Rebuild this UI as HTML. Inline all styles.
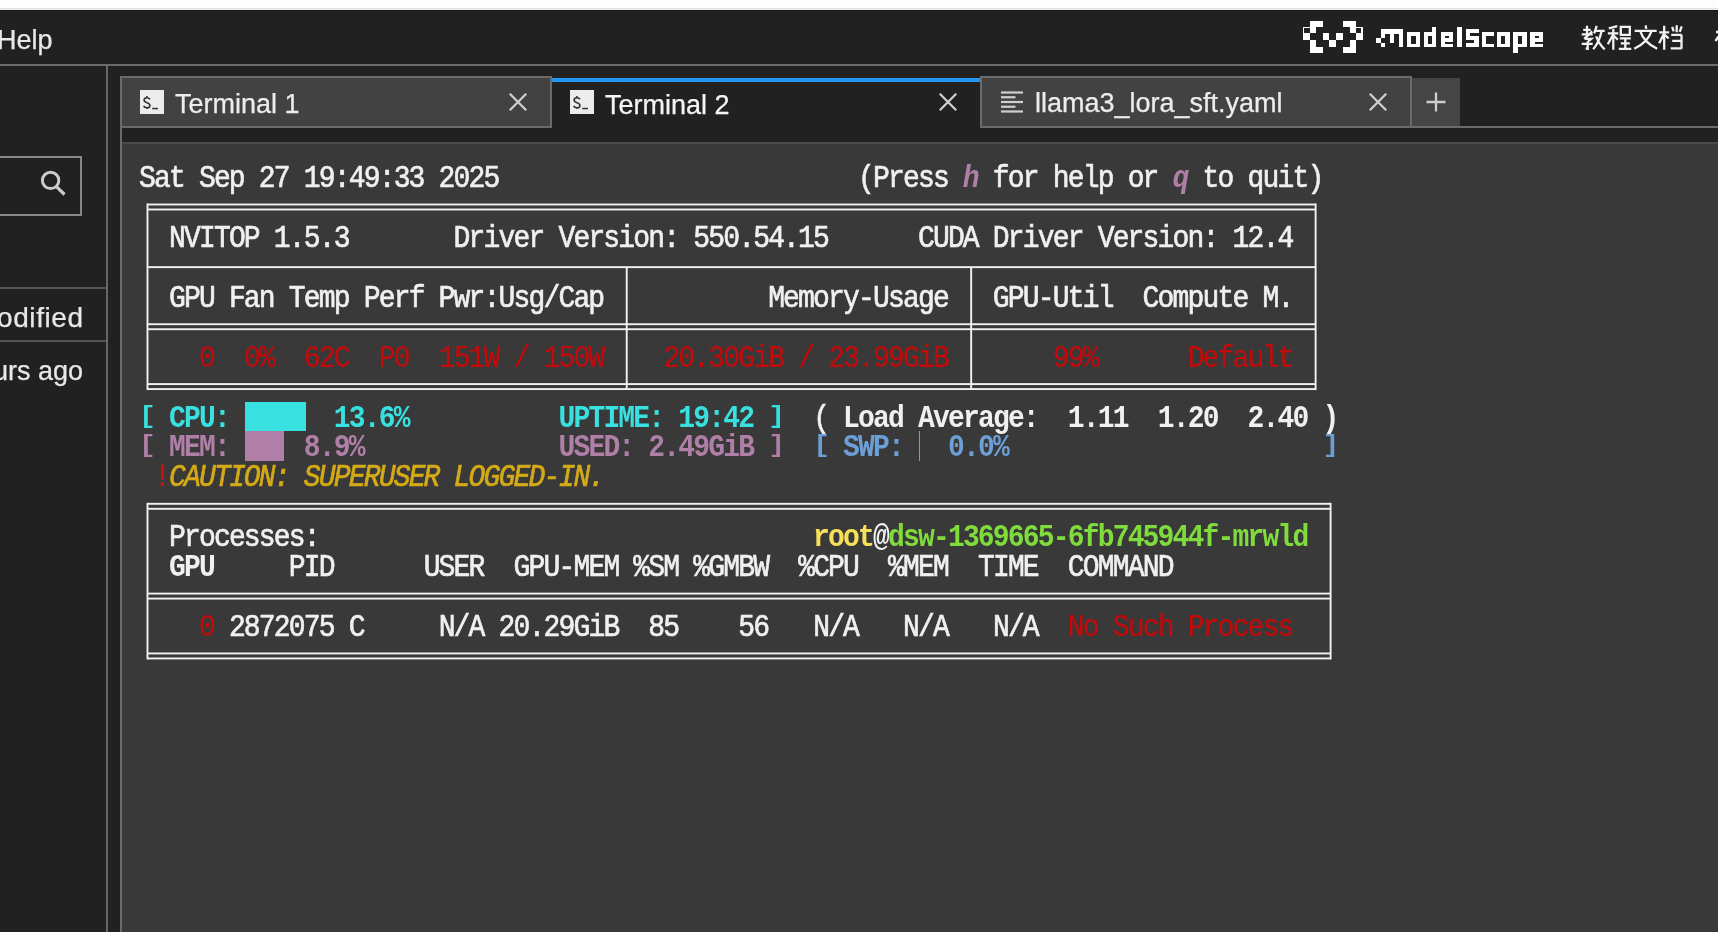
<!DOCTYPE html><html><head><meta charset="utf-8"><style>
*{margin:0;padding:0;box-sizing:border-box}
html,body{width:1718px;height:932px;overflow:hidden;background:#212121}
body{position:relative;font-family:"Liberation Sans",sans-serif;color:#eee}
.a{position:absolute}
.u{-webkit-text-stroke:0.25px currentColor;will-change:transform}
.row{position:absolute;left:139.088px;height:29.93px;line-height:29.93px;white-space:pre;font-family:"Liberation Mono",monospace;font-size:28.0px;letter-spacing:-1.824px;color:#f0f0f0;-webkit-text-stroke:0.6px currentColor;will-change:transform}
.row>i{font-style:normal;display:inline-block;transform:scaleY(1.1);transform-origin:50% 50%}
.row>i.b{font-weight:bold;-webkit-text-stroke:0}
.row>i.it{font-style:italic}
.row>i.rd{-webkit-text-stroke:0.15px currentColor}
.row>i.br{font-weight:bold;-webkit-text-stroke:0;transform:translateY(-1.5px) scaleY(0.84)}
</style></head><body>
<div class="a" style="left:0;top:0;width:1718px;height:8px;background:#fdfdfd"></div>
<div class="a" style="left:0;top:8px;width:1718px;height:1px;background:#e2e2e2"></div>
<div class="a" style="left:0;top:9px;width:1718px;height:1px;background:#eeeeee"></div>
<div class="a" style="left:0;top:10px;width:1718px;height:1px;background:#171717"></div>
<div class="a u" style="left:-3px;top:20px;font-size:27px;line-height:40px;color:#e8e8e8">Help</div>
<div class="a" style="left:0;top:64px;width:1718px;height:2px;background:#6b6b6b"></div>
<div class="a" style="left:106px;top:66px;width:2px;height:866px;background:#666666"></div>
<div class="a" style="left:-2px;top:156px;width:84px;height:60px;border:2px solid #888888"></div>
<svg class="a" style="left:36px;top:166px" width="34" height="34" viewBox="0 0 34 34"><circle cx="14.6" cy="14.4" r="8.2" fill="none" stroke="#cccccc" stroke-width="3"/><line x1="20.4" y1="20.6" x2="28.5" y2="28.5" stroke="#cccccc" stroke-width="3.2"/></svg>
<div class="a" style="left:0;top:287px;width:106px;height:2px;background:#555555"></div>
<div class="a" style="left:0;top:340px;width:106px;height:2px;background:#555555"></div>
<div class="a u" style="left:-3px;top:298px;font-size:28px;letter-spacing:0.6px;line-height:40px;color:#e8e8e8;white-space:pre">odified</div>
<div class="a u" style="left:-37px;top:351px;font-size:27px;line-height:40px;color:#e8e8e8;white-space:pre">hours ago</div>
<svg class="a" style="left:0;top:0" width="1718" height="66" shape-rendering="crispEdges"><g fill="#ffffff"><rect x="1309.7" y="20.8" width="6.30" height="6.00"/><rect x="1316.0" y="20.8" width="6.50" height="6.00"/><rect x="1342.8" y="20.8" width="6.80" height="6.00"/><rect x="1349.6" y="20.8" width="6.20" height="6.00"/><rect x="1309.7" y="26.8" width="6.30" height="6.50"/><rect x="1349.6" y="26.8" width="6.20" height="6.50"/><rect x="1303.0" y="33.3" width="6.70" height="6.80"/><rect x="1322.5" y="33.3" width="6.80" height="6.80"/><rect x="1336.0" y="33.3" width="6.80" height="6.80"/><rect x="1355.8" y="33.3" width="6.80" height="6.80"/><rect x="1309.7" y="40.1" width="6.30" height="6.80"/><rect x="1329.3" y="40.1" width="6.70" height="6.80"/><rect x="1349.6" y="40.1" width="6.20" height="6.80"/><rect x="1309.7" y="46.9" width="6.30" height="6.20"/><rect x="1316.0" y="46.9" width="6.50" height="6.20"/><rect x="1342.8" y="46.9" width="6.80" height="6.20"/><rect x="1349.6" y="46.9" width="6.20" height="6.20"/><rect x="1303.0" y="26.8" width="6.70" height="6.50"/><rect x="1355.8" y="26.8" width="6.80" height="6.50"/><rect x="1380.9" y="29.3" width="22.00" height="4.70"/><rect x="1380.9" y="29.3" width="4.20" height="8.40"/><rect x="1376.2" y="37.7" width="4.70" height="5.30"/><rect x="1380.9" y="43.0" width="4.20" height="4.10"/><rect x="1389.8" y="34.0" width="4.20" height="8.90"/><rect x="1398.7" y="29.3" width="4.20" height="17.80"/><rect x="1407.1" y="32.2" width="12.60" height="14.90"/><rect x="1423.9" y="32.2" width="12.50" height="14.90"/><rect x="1432.2" y="27.0" width="4.20" height="5.20"/><rect x="1440.6" y="32.2" width="12.60" height="14.90"/><rect x="1457.2" y="27.0" width="4.50" height="20.10"/><rect x="1465.5" y="28.8" width="13.30" height="18.30"/><rect x="1482.0" y="32.2" width="12.00" height="14.90"/><rect x="1496.9" y="32.2" width="13.10" height="14.90"/><rect x="1513.4" y="32.2" width="13.10" height="14.90"/><rect x="1513.4" y="47.1" width="4.70" height="5.80"/><rect x="1529.9" y="32.2" width="13.10" height="14.90"/></g><g fill="#212121"><rect x="1304.4" y="28.1" width="5.30" height="5.20"/><rect x="1355.8" y="28.1" width="5.40" height="5.20"/></g><g fill="#212121"><rect x="1411.3" y="35.9" width="4.20" height="7.80"/><rect x="1428.0" y="35.9" width="4.20" height="7.80"/><rect x="1444.8" y="35.9" width="4.20" height="1.80"/><rect x="1444.8" y="41.9" width="8.40" height="1.80"/><rect x="1470.2" y="33.3" width="8.60" height="2.60"/><rect x="1465.5" y="40.1" width="8.10" height="2.60"/><rect x="1486.4" y="35.9" width="7.60" height="7.60"/><rect x="1501.1" y="35.9" width="4.20" height="7.60"/><rect x="1518.1" y="35.9" width="3.90" height="7.60"/><rect x="1534.6" y="35.9" width="4.20" height="2.10"/><rect x="1534.6" y="42.2" width="8.40" height="1.80"/></g></svg>
<svg class="a" style="left:0;top:0" width="1718" height="66"><g fill="none" stroke="#f2f2f2" stroke-width="2.3"><path transform="translate(1581.2,25.3)" d="M2 4.5H9.5M5.8 0.5V9M0.5 9H11.5M11 6L3 13.5M3.5 13.5H10L7 16M6.5 16V23.5L4.5 23M0.5 18.5H11.5M15.5 0.5L13 8M14 5.5H23.5M20.5 5.5Q18 17 12 24M15 11Q18 19 23.5 24"/><path transform="translate(1607.3,25.3)" d="M10 0.8L1.5 3M0.5 8H11M6 2V24.5M6 9L0.5 19M6.5 10.5L10.5 14.5M13.5 1.5H22.5V9.5H13.5ZM12.5 13H23.5M13.5 18H22.5M11.5 23.5H24M18 13V23.5"/><path transform="translate(1633.7,25.3)" d="M12 0L12.5 3.5M1 5.5H23M6.5 5.5Q10 17 23.5 23.5M18 5.5Q14 17 0.5 23.5"/><path transform="translate(1658.7,25.3)" d="M0.5 7H10.5M5.5 0.5V24.5M5.5 8L0.5 18M6 9.5L10 13M13.5 1.5L15 6M18 0V7M23 1L21 6.5M12.5 9.5H23M13.5 15.5H23M12 23H23M22.8 9.5V23.5"/><path d="M1716 32H1719M1715.5 41L1718.5 36.5"/></g></svg>
<div class="a" style="left:120px;top:142px;width:1598px;height:790px;background:#393939"></div>
<div class="a" style="left:120px;top:142px;width:1598px;height:2px;background:#4a4a4a"></div>
<div class="a" style="left:120px;top:76px;width:2px;height:856px;background:#6b6b6b"></div>
<div class="a" style="left:120px;top:126px;width:1598px;height:2px;background:#6b6b6b"></div>
<div class="a" style="left:120px;top:76px;width:432px;height:52px;background:#424242;border:2px solid #6b6b6b"></div>
<div class="a" style="left:552px;top:77px;width:428px;height:51px;background:#212121"></div>
<div class="a" style="left:552px;top:77.5px;width:428px;height:4.5px;background:#2196f3"></div>
<div class="a" style="left:980px;top:76px;width:432px;height:52px;background:#424242;border:2px solid #6b6b6b"></div>
<div class="a" style="left:1412px;top:78px;width:48px;height:48px;background:#454545"></div>
<svg class="a" style="left:140px;top:90px" width="24" height="24"><rect x="0" y="0" width="24" height="24" fill="#ececec"/><path d="M10 9.4C9.4 8.3 8.3 7.8 6.9 7.8C5.1 7.8 4.1 8.8 4.1 10.1C4.1 11.6 5.4 12.2 6.9 12.7C8.6 13.2 9.9 13.8 9.9 15.4C9.9 16.9 8.7 17.8 6.9 17.8C5.3 17.8 4.1 17.1 3.6 15.9M6.9 6V7.8M6.9 17.8V19" fill="none" stroke="#333" stroke-width="1.6"/><rect x="12.2" y="17.8" width="5.8" height="1.5" fill="#333"/></svg>
<svg class="a" style="left:570px;top:90px" width="24" height="24"><rect x="0" y="0" width="24" height="24" fill="#ececec"/><path d="M10 9.4C9.4 8.3 8.3 7.8 6.9 7.8C5.1 7.8 4.1 8.8 4.1 10.1C4.1 11.6 5.4 12.2 6.9 12.7C8.6 13.2 9.9 13.8 9.9 15.4C9.9 16.9 8.7 17.8 6.9 17.8C5.3 17.8 4.1 17.1 3.6 15.9M6.9 6V7.8M6.9 17.8V19" fill="none" stroke="#333" stroke-width="1.6"/><rect x="12.2" y="17.8" width="5.8" height="1.5" fill="#333"/></svg>
<svg class="a" style="left:1000px;top:90px" width="24" height="24"><rect x="1" y="1.4" width="22" height="2.2" fill="#cfcfcf"/><rect x="1" y="6.15" width="14.5" height="2.2" fill="#cfcfcf"/><rect x="1" y="10.9" width="22" height="2.2" fill="#cfcfcf"/><rect x="1" y="15.65" width="14.5" height="2.2" fill="#cfcfcf"/><rect x="1" y="20.4" width="22" height="2.2" fill="#cfcfcf"/></svg>
<div class="a u" style="left:175px;top:84px;font-size:27px;line-height:40px;color:#ececec;white-space:pre">Terminal 1</div>
<div class="a u" style="left:605px;top:84.5px;font-size:27px;line-height:40px;color:#f4f4f4;white-space:pre">Terminal 2</div>
<div class="a u" style="left:1035px;top:83px;font-size:27px;line-height:40px;color:#ececec;white-space:pre">llama3_lora_sft.yaml</div>
<svg class="a" style="left:507px;top:91px" width="22" height="22"><path d="M2.8 2.8L19.2 19.2M19.2 2.8L2.8 19.2" stroke="#cfcfcf" stroke-width="2.3"/></svg>
<svg class="a" style="left:937px;top:91px" width="22" height="22"><path d="M2.8 2.8L19.2 19.2M19.2 2.8L2.8 19.2" stroke="#cfcfcf" stroke-width="2.3"/></svg>
<svg class="a" style="left:1367px;top:91px" width="22" height="22"><path d="M2.8 2.8L19.2 19.2M19.2 2.8L2.8 19.2" stroke="#cfcfcf" stroke-width="2.3"/></svg>
<svg class="a" style="left:1425px;top:91px" width="22" height="22"><path d="M11 1.5V20.5M1.5 11H20.5" stroke="#cfcfcf" stroke-width="2.3"/></svg>
<svg class="a" style="left:0;top:0" width="1718" height="932" fill="#f2f2f2"><rect x="147.49" y="203.55" width="1168.13" height="1.9"/><rect x="147.49" y="208.55" width="1168.13" height="1.9"/><rect x="147.49" y="266.20" width="1168.13" height="1.9"/><rect x="147.49" y="323.26" width="1168.13" height="1.9"/><rect x="147.49" y="328.26" width="1168.13" height="1.9"/><rect x="147.49" y="383.12" width="1168.13" height="1.9"/><rect x="147.49" y="388.12" width="1168.13" height="1.9"/><rect x="146.54" y="203.50" width="1.9" height="186.58"/><rect x="1314.67" y="203.50" width="1.9" height="186.58"/><rect x="625.77" y="267.15" width="1.9" height="121.92"/><rect x="970.22" y="267.15" width="1.9" height="121.92"/><rect x="147.49" y="502.85" width="1183.10" height="1.9"/><rect x="147.49" y="507.85" width="1183.10" height="1.9"/><rect x="147.49" y="592.63" width="1183.10" height="1.9"/><rect x="147.49" y="597.63" width="1183.10" height="1.9"/><rect x="147.49" y="652.50" width="1183.10" height="1.9"/><rect x="147.49" y="657.50" width="1183.10" height="1.9"/><rect x="146.54" y="502.80" width="1.9" height="156.65"/><rect x="1329.64" y="502.80" width="1.9" height="156.65"/></svg>
<div class="row" style="top:164.10px"><i>Sat Sep 27 19:49:33 2025</i><i>                        </i><i>(Press </i><i style="color:#b07fa8" class="b it">h</i><i> for help or </i><i style="color:#b07fa8" class="b it">q</i><i> to quit)</i></div>
<div class="row" style="top:223.96px"><i>  </i><i>NVITOP 1.5.3</i><i>       </i><i>Driver Version: 550.54.15</i><i>      </i><i>CUDA Driver Version: 12.4</i></div>
<div class="row" style="top:283.82px"><i>  </i><i>GPU Fan Temp Perf Pwr:Usg/Cap</i><i>           </i><i>Memory-Usage</i><i>   </i><i>GPU-Util  Compute M.</i></div>
<div class="row" style="top:343.68px"><i>    </i><i style="color:#c40a0a" class="rd">0</i><i>  </i><i style="color:#c40a0a" class="rd">0%</i><i>  </i><i style="color:#c40a0a" class="rd">62C</i><i>  </i><i style="color:#c40a0a" class="rd">P0</i><i>  </i><i style="color:#c40a0a" class="rd">151W / 150W</i><i>    </i><i style="color:#c40a0a" class="rd">20.30GiB / 23.99GiB</i><i>       </i><i style="color:#c40a0a" class="rd">99%</i><i>      </i><i style="color:#c40a0a" class="rd">Default</i></div>
<div class="row" style="top:403.54px"><i style="color:#38e0e0" class="br">[</i><i> </i><i style="color:#38e0e0" class="b">CPU:</i><i>       </i><i style="color:#38e0e0" class="b">13.6%</i><i>          </i><i style="color:#38e0e0" class="b">UPTIME:</i><i> </i><i style="color:#38e0e0" class="b">19:42</i><i> </i><i style="color:#38e0e0" class="br">]</i><i>  </i><i>(</i><i> </i><i style="color:#f0f0f0" class="b">Load Average:</i><i>  </i><i style="color:#f0f0f0" class="b">1.11</i><i>  </i><i style="color:#f0f0f0" class="b">1.20</i><i>  </i><i style="color:#f0f0f0" class="b">2.40</i><i> </i><i style="color:#f0f0f0" class="b">)</i></div>
<div class="row" style="top:433.47px"><i style="color:#b07fa8" class="br">[</i><i> </i><i style="color:#b07fa8" class="b">MEM:</i><i>     </i><i style="color:#b07fa8" class="b">8.9%</i><i>             </i><i style="color:#b07fa8" class="b">USED:</i><i> </i><i style="color:#b07fa8" class="b">2.49GiB</i><i> </i><i style="color:#b07fa8" class="br">]</i><i>  </i><i style="color:#6b9fd6" class="br">[</i><i> </i><i style="color:#6b9fd6" class="b">SWP:</i><i>   </i><i style="color:#6b9fd6" class="b">0.0%</i><i>                     </i><i style="color:#6b9fd6" class="br">]</i></div>
<div class="row" style="top:463.40px"><i> </i><i style="color:#d01010">!</i><i style="color:#d4aa17" class="it">CAUTION: SUPERUSER LOGGED-IN.</i></div>
<div class="a" style="left:244.83px;top:401.54px;width:61.6px;height:29.93px;background:#38e0e0"></div>
<div class="a" style="left:244.83px;top:431.47px;width:39.27px;height:29.93px;background:#b07fa8"></div>
<div class="a" style="left:918.8px;top:431px;width:1.7px;height:30px;background:#6b9fd6"></div>
<div class="row" style="top:523.26px"><i>  </i><i>Processes:</i><i>                                 </i><i style="color:#f6e05a" class="b">root</i><i style="color:#f0f0f0" class="b">@</i><i style="color:#80dc3c" class="b">dsw-1369665-6fb745944f-mrwld</i></div>
<div class="row" style="top:553.19px"><i>  </i><i style="color:#f0f0f0" class="b">GPU</i><i>     </i><i>PID</i><i>      </i><i>USER</i><i>  </i><i>GPU-MEM</i><i> </i><i>%SM</i><i> </i><i>%GMBW</i><i>  </i><i>%CPU</i><i>  </i><i>%MEM</i><i>  </i><i>TIME</i><i>  </i><i>COMMAND</i></div>
<div class="row" style="top:613.05px"><i>    </i><i style="color:#c40a0a" class="rd">0</i><i> </i><i>2872075</i><i> </i><i>C</i><i>     </i><i>N/A</i><i> </i><i>20.29GiB</i><i>  </i><i>85</i><i>    </i><i>56</i><i>   </i><i>N/A</i><i>   </i><i>N/A</i><i>   </i><i>N/A</i><i>  </i><i style="color:#c40a0a" class="rd">No Such Process</i></div>
</body></html>
